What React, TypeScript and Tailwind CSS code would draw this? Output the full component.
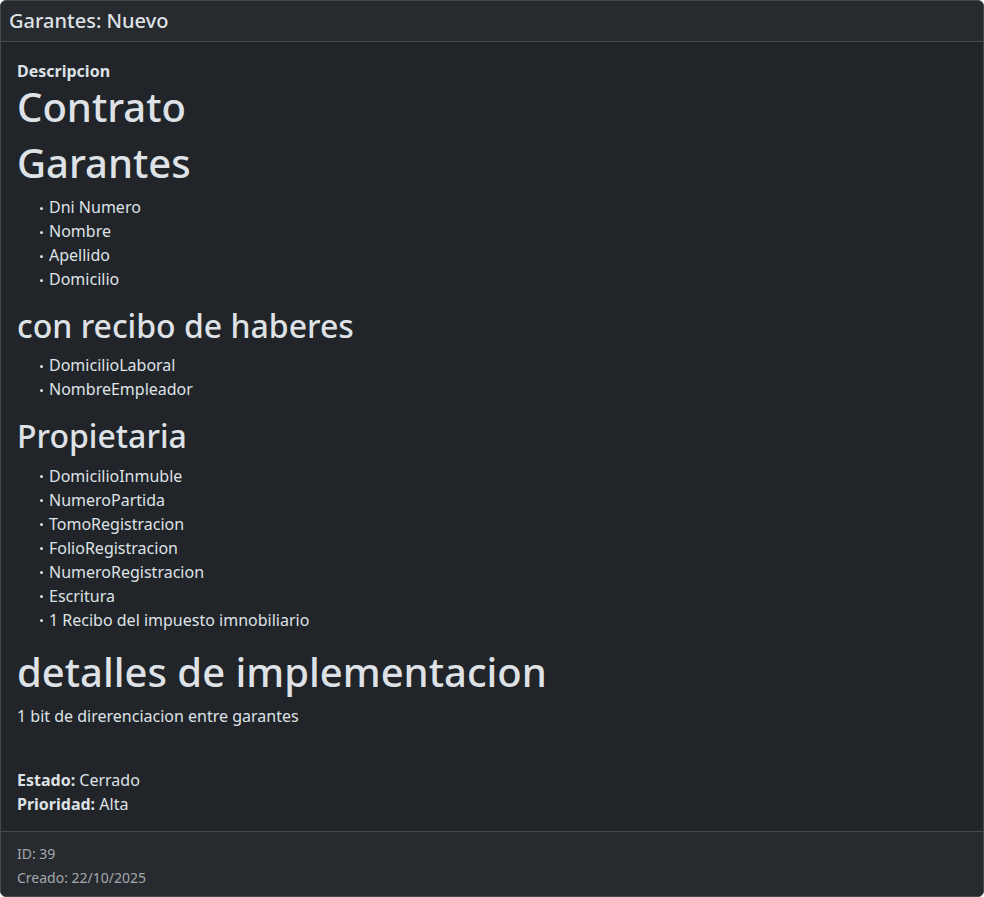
import React from "react";

const Item = ({ children }: { children: React.ReactNode }) => (
  <li className="flex items-center leading-6">
    <span className="ml-[23px] mr-[6px] mt-[2px] h-[3px] w-[3px] shrink-0 rounded-full bg-[#dee2e6]" />
    <span>{children}</span>
  </li>
);

export default function App() {
  return (
    <div className="min-h-screen bg-white" style={{ fontFamily: '"Noto Sans", "Liberation Sans", sans-serif' }}>
      <div className="flex flex-col bg-[#212529] text-[#dee2e6] border border-[#44484c] rounded-md overflow-hidden">
        <div className="bg-[#272b2f] border-b border-[#44484c] p-2">
          <h5 className="text-[20px] leading-6 font-medium m-0">Garantes: Nuevo</h5>
        </div>
        <div className="px-4 pt-[17px] pb-[15px] text-[16px] leading-6">
          <div className="font-bold">Descripcion</div>
          <div>
            <h1 className="text-[40px] leading-[1.2] font-medium mb-2">Contrato</h1>
            <h1 className="text-[40px] leading-[1.2] font-medium mb-2">Garantes</h1>
            <ul className="list-none mb-4">
              <Item>Dni Numero</Item>
              <Item>Nombre</Item>
              <Item>Apellido</Item>
              <Item>Domicilio</Item>
            </ul>
            <h2 className="text-[32px] leading-[1.2] font-medium mb-2">con recibo de haberes</h2>
            <ul className="list-none mb-4">
              <Item>DomicilioLaboral</Item>
              <Item>NombreEmpleador</Item>
            </ul>
            <h2 className="text-[32px] leading-[1.2] font-medium mb-2">Propietaria</h2>
            <ul className="list-none mb-4">
              <Item>DomicilioInmuble</Item>
              <Item>NumeroPartida</Item>
              <Item>TomoRegistracion</Item>
              <Item>FolioRegistracion</Item>
              <Item>NumeroRegistracion</Item>
              <Item>Escritura</Item>
              <Item>1 Recibo del impuesto imnobiliario</Item>
            </ul>
            <h1 className="text-[40px] leading-[1.2] font-medium mb-2">detalles de implementacion</h1>
            <p className="mb-[40px]">1 bit de direrenciacion entre garantes</p>
          </div>
          <div>
            <div>
              <span className="font-bold">Estado:</span> Cerrado
            </div>
            <div>
              <span className="font-bold">Prioridad:</span> Alta
            </div>
          </div>
        </div>
        <div className="bg-[#272b2f] border-t border-[#44484c] px-4 pt-[10px] pb-[6px] text-[#a3a8ad]">
          <div className="text-[14px] leading-6">ID: 39</div>
          <div className="text-[14px] leading-6">Creado: 22/10/2025</div>
        </div>
      </div>
    </div>
  );
}
